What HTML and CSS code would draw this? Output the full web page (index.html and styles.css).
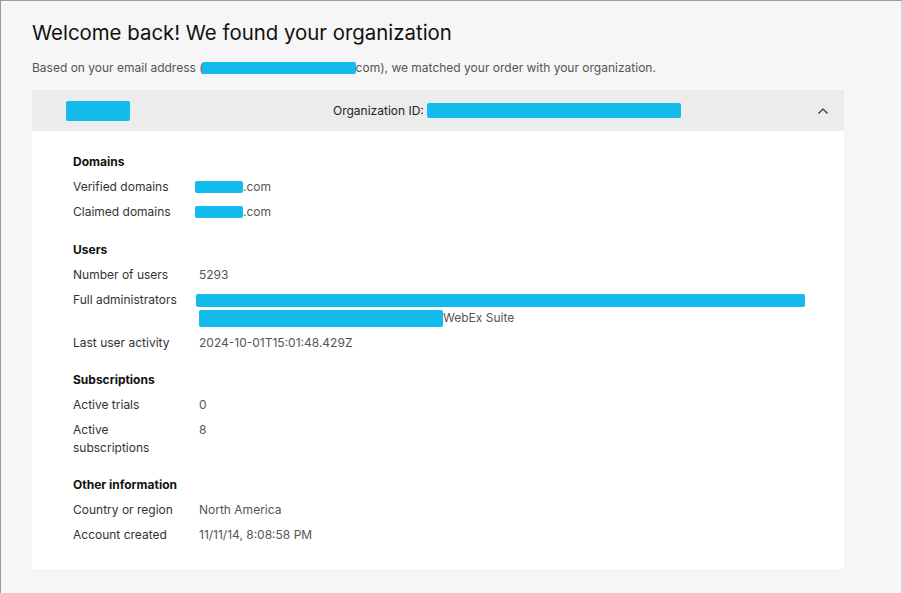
FILE: index.html
```html
<!DOCTYPE html>
<html lang="en">
<head>
    <meta charset="UTF-8">
    <meta name="viewport" content="width=device-width, initial-scale=1.0">
    <title>Welcome back</title>
    <link rel="stylesheet" href="styles.css">
</head>
<body>
    <div class="page">
        <h1>Welcome back! We found your organization</h1>
        <p class="lead">Based on your email address (<span class="redact email"></span>com), we matched your order with your organization.</p>

        <div class="card">
            <div class="card-head">
                <span class="redact org-logo"></span>
                <div class="org-id">Organization ID: <span class="redact org-num"></span></div>
                <svg class="chevron" width="12" height="8" viewBox="0 0 12 8">
                    <path d="M1.5 6.5 L6 2 L10.5 6.5" fill="none" stroke="#333" stroke-width="1.2"/>
                </svg>
            </div>

            <div class="card-body">
                <div class="section">
                    <h4>Domains</h4>
                    <div class="row">
                        <div class="label">Verified domains</div>
                        <div class="value"><span class="redact domain"></span>.com</div>
                    </div>
                    <div class="row">
                        <div class="label">Claimed domains</div>
                        <div class="value"><span class="redact domain"></span>.com</div>
                    </div>
                </div>

                <div class="section">
                    <h4>Users</h4>
                    <div class="row">
                        <div class="label">Number of users</div>
                        <div class="value">5293</div>
                    </div>
                    <div class="row">
                        <div class="label">Full administrators</div>
                        <div class="value">
                            <div class="admin-line"><span class="redact admin-a"></span></div>
                            <div><span class="redact admin-b"></span>WebEx Suite</div>
                        </div>
                    </div>
                    <div class="row">
                        <div class="label">Last user activity</div>
                        <div class="value">2024-10-01T15:01:48.429Z</div>
                    </div>
                </div>

                <div class="section">
                    <h4>Subscriptions</h4>
                    <div class="row">
                        <div class="label">Active trials</div>
                        <div class="value">0</div>
                    </div>
                    <div class="row">
                        <div class="label">Active subscriptions</div>
                        <div class="value">8</div>
                    </div>
                </div>

                <div class="section">
                    <h4>Other information</h4>
                    <div class="row">
                        <div class="label">Country or region</div>
                        <div class="value">North America</div>
                    </div>
                    <div class="row">
                        <div class="label">Account created</div>
                        <div class="value">11/11/14, 8:08:58 PM</div>
                    </div>
                </div>
            </div>
        </div>
    </div>
</body>
</html>
```

FILE: styles.css
```css
html, body {
    margin: 0;
    height: 100%;
}
body {
    font-family: Inter, 'Liberation Sans', sans-serif;
    background: #f6f6f6;
    color: #333;
    box-sizing: border-box;
    border-top: 1px solid #9b9b9b;
    border-left: 1px solid #9b9b9b;
    border-right: 1px solid #d8d8d8;
}
.page {
    padding: 17px 0 0 31px;
    width: 812px;
}
h1 {
    margin: 0;
    font-size: 20.4px;
    font-weight: 400;
    line-height: 30px;
    color: #111;
}
.lead {
    margin: 11px 0 0;
    font-size: 12px;
    line-height: 18px;
    color: #555;
}
.redact {
    display: inline-block;
    background: #12bbeb;
    border-radius: 2px;
    vertical-align: middle;
}
.redact.email {
    width: 154px;
    height: 12px;
    margin-left: -2px;
    margin-top: -2px;
}
.card {
    margin-top: 13px;
    background: #fff;
}
.card-head {
    display: flex;
    align-items: center;
    height: 41px;
    background: #ececec;
    padding: 0 15px 0 34px;
    font-size: 12px;
    color: #222;
}
.redact.org-logo {
    width: 64px;
    height: 20px;
    border-radius: 2px;
}
.org-id {
    margin-left: 203px;
    flex: 1;
    display: flex;
    align-items: center;
}
.redact.org-num {
    width: 254px;
    height: 15px;
    margin-left: 3px;
}
.card-body {
    padding: 22px 0 25px 41px;
    font-size: 12px;
    line-height: 18px;
}
.section + .section {
    margin-top: 20px;
}
.section:nth-child(n+3) {
    margin-top: 19px;
}
h4 {
    margin: 0 0 7px;
    font-size: 12px;
    font-weight: 700;
    line-height: 18px;
    color: #111;
}
.row {
    display: flex;
}
.row + .row {
    margin-top: 7px;
}
.label {
    width: 112px;
    margin-right: 14px;
    color: #333;
}
.value {
    color: #555;
}
.redact.domain {
    width: 48px;
    height: 12px;
    margin-left: -4px;
    margin-top: -2px;
}
.admin-line {
    height: 18px;
    display: flex;
    align-items: center;
}
.redact.admin-a {
    width: 609px;
    height: 13px;
    margin-left: -3px;
}
.redact.admin-b {
    width: 244px;
    height: 17px;
    margin-top: -1px;
}
```
